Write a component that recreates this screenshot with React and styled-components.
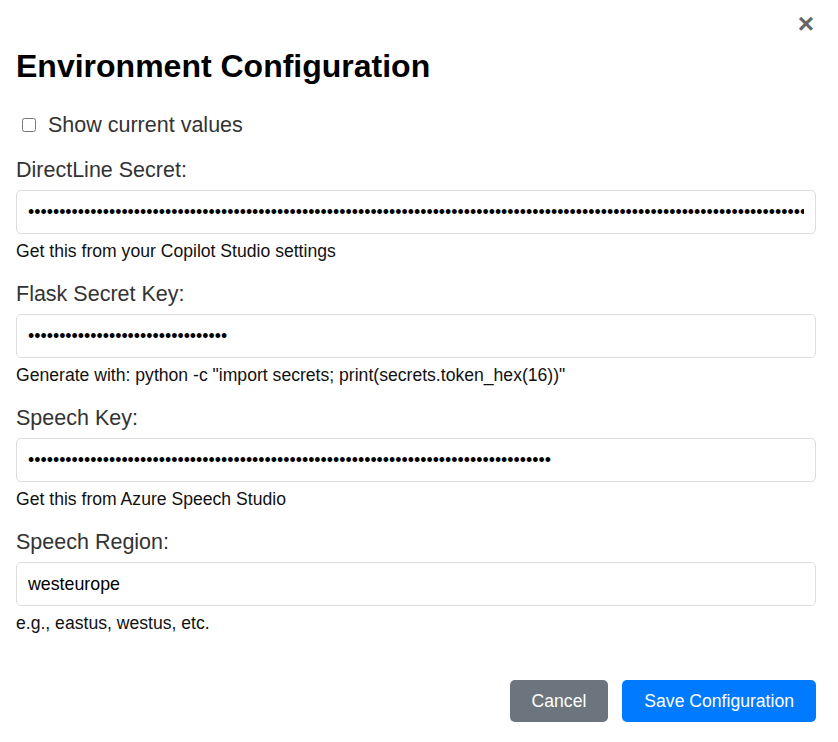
import React from 'react';
import styled, { createGlobalStyle } from 'styled-components';

const GlobalStyle = createGlobalStyle`
    * {
        box-sizing: border-box;
    }

    body {
        margin: 0;
        background: #ffffff;
        font-family: "Liberation Sans", Arial, Helvetica, sans-serif;
    }
`;

const fields = [
    {
        id: 'directline',
        label: 'DirectLine Secret:',
        type: 'password',
        value: 'a'.repeat(140),
        help: 'Get this from your Copilot Studio settings',
    },
    {
        id: 'flask',
        label: 'Flask Secret Key:',
        type: 'password',
        value: 'b'.repeat(32),
        help: 'Generate with: python -c "import secrets; print(secrets.token_hex(16))"',
    },
    {
        id: 'speechkey',
        label: 'Speech Key:',
        type: 'password',
        value: 'c'.repeat(84),
        help: 'Get this from Azure Speech Studio',
    },
    {
        id: 'region',
        label: 'Speech Region:',
        type: 'text',
        value: 'westeurope',
        help: 'e.g., eastus, westus, etc.',
    },
];

const App = () => {
    return (
        <>
            <GlobalStyle />
            <Modal>
                <CloseRow>
                    <CloseButton aria-label="Close">×</CloseButton>
                </CloseRow>
                <Title>Environment Configuration</Title>

                <ToggleRow>
                    <input type="checkbox" id="show-values" />
                    <label htmlFor="show-values">Show current values</label>
                </ToggleRow>

                <Fields>
                    {fields.map((f) => (
                        <Field key={f.id}>
                            <Label htmlFor={f.id}>{f.label}</Label>
                            <Input id={f.id} type={f.type} defaultValue={f.value} />
                            <Help>{f.help}</Help>
                        </Field>
                    ))}
                </Fields>

                <Actions>
                    <Button $variant="secondary">Cancel</Button>
                    <Button $variant="primary">Save Configuration</Button>
                </Actions>
            </Modal>
        </>
    );
}

export default App;



const Modal = styled.div`
    width: 838px;
    padding: 10px 22px 21px 16px;
    display: flex;
    flex-direction: column;
`;

const CloseRow = styled.div`
    display: flex;
    justify-content: flex-end;
    height: 28px;
`;

const CloseButton = styled.button`
    border: none;
    background: none;
    padding: 0;
    margin-right: 2px;
    font-family: "Liberation Sans", Arial, sans-serif;
    font-size: 28px;
    line-height: 28px;
    font-weight: 700;
    color: #666666;
    cursor: pointer;
`;

const Title = styled.h1`
    margin: 9px 0 0 0;
    font-size: 32px;
    line-height: 38px;
    font-weight: 700;
    color: #000000;
`;

const ToggleRow = styled.div`
    margin-top: 28px;
    display: flex;
    align-items: center;
    height: 24px;

    input {
        width: 14px;
        height: 14px;
        margin: 0 12px 0 6px;
    }

    label {
        font-size: 21.5px;
        line-height: 24px;
        color: #333333;
    }
`;

const Fields = styled.div`
    margin-top: 21px;
    display: flex;
    flex-direction: column;
    gap: 21.5px;
`;

const Field = styled.div`
    display: flex;
    flex-direction: column;
`;

const Label = styled.label`
    font-size: 21.5px;
    line-height: 24px;
    color: #333333;
`;

const Input = styled.input`
    margin-top: 8px;
    width: 100%;
    height: 44px;
    padding: 0 11px;
    border: 1px solid #dddddd;
    border-radius: 5px;
    font-family: "Liberation Sans", Arial, sans-serif;
    font-size: 17.8px;
    color: #000000;
    background: #ffffff;
    outline: none;
`;

const Help = styled.div`
    margin-top: 6.5px;
    font-size: 17.6px;
    line-height: 20px;
    color: #111111;
`;

const Actions = styled.div`
    margin-top: 47.5px;
    display: flex;
    justify-content: flex-end;
    gap: 14px;
`;

const Button = styled.button`
    height: 42px;
    padding: 0 22px;
    border: none;
    border-radius: 5px;
    font-family: "Liberation Sans", Arial, sans-serif;
    font-size: 17.6px;
    color: #ffffff;
    background: ${(p) => (p.$variant === 'primary' ? '#007bff' : '#6c757d')};
    cursor: pointer;
`;
